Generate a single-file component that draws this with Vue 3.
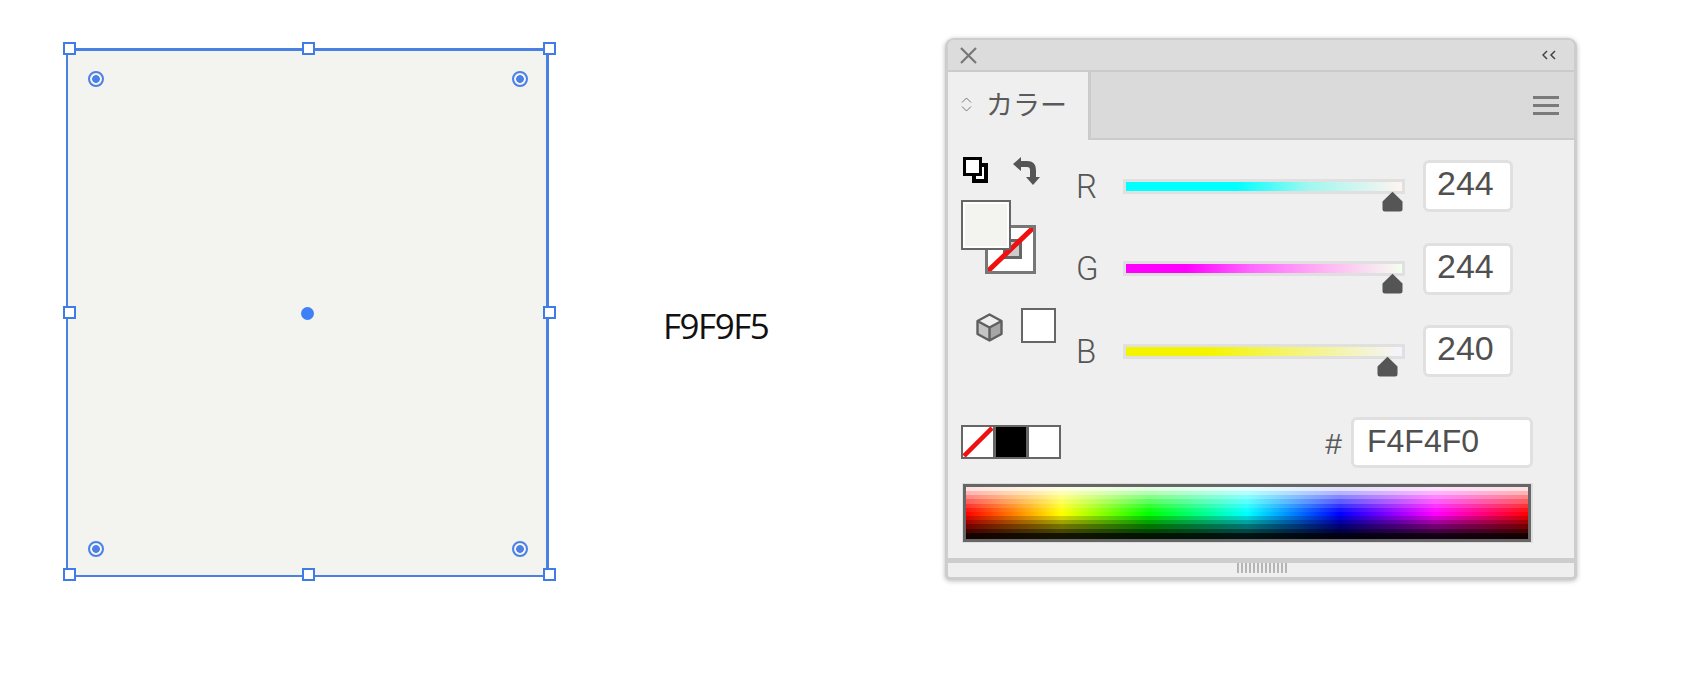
<script setup>
const sliders = [
  { label: 'R', value: 244, cls: 'grad-r' },
  { label: 'G', value: 244, cls: 'grad-g' },
  { label: 'B', value: 240, cls: 'grad-b' },
]
const thumbLeft = (v) => `${256 + (v - 244) * 1.25}px`
const handles = ['tl', 'tm', 'tr', 'ml', 'mr', 'bl', 'bm', 'br']
const corners = ['c-tl', 'c-tr', 'c-bl', 'c-br']
</script>

<template>
  <div class="page">
    <div class="selection">
      <span v-for="h in handles" :key="h" class="handle" :class="h"></span>
      <span v-for="c in corners" :key="c" class="corner" :class="c"></span>
      <span class="center-dot"></span>
    </div>

    <div class="note">F9F9F5</div>

    <div class="panel">
      <div class="titlebar">
        <svg class="close" width="17" height="17" viewBox="0 0 17 17">
          <path d="M1 1 L16 16 M16 1 L1 16" stroke="#777" stroke-width="2.2" fill="none" />
        </svg>
        <svg class="collapse" width="14" height="10" viewBox="0 0 14 10">
          <path d="M5 1 L1 5 L5 9 M13 1 L9 5 L13 9" stroke="#444" stroke-width="1.5" fill="none" />
        </svg>
      </div>

      <div class="tabbar">
        <div class="tab">
          <svg width="11" height="15" viewBox="0 0 11 15">
            <path d="M1 5.5 L5.5 1 L10 5.5 M1 9.5 L5.5 14 L10 9.5" stroke="#777" stroke-width="1" fill="none" />
          </svg>
          <span class="tab-label">カラー</span>
        </div>
        <div class="menu">
          <span></span><span></span><span></span>
        </div>
      </div>

      <div class="body">
        <div class="upper">
          <div class="tools">
            <div class="tool-icons">
              <svg width="25" height="26" viewBox="0 0 25 26">
                <rect x="11" y="8" width="12" height="16" fill="#fff" stroke="#000" stroke-width="4" />
                <rect x="1.5" y="1.5" width="16" height="16" fill="#fff" stroke="#000" stroke-width="3" />
              </svg>
              <svg width="27" height="28" viewBox="0 0 27 28">
                <path d="M0 7 L8 0 V4 H14 Q23 4 23 13 V20 H27 L20 28 L13 20 H17 V13 Q17 10 14 10 H8 V14 Z" fill="#555" />
              </svg>
            </div>

            <div class="swatches">
              <div class="stroke-swatch">
                <span class="stroke-inner"></span>
                <svg class="slash" width="45" height="43" viewBox="0 0 45 43">
                  <line x1="1" y1="42" x2="44" y2="1" stroke="#f01010" stroke-width="5" stroke-linecap="round" />
                </svg>
              </div>
              <div class="fill-swatch"></div>
            </div>

            <div class="gamut">
              <svg width="27" height="29" viewBox="0 0 27 29">
                <path d="M13.5 14.5 L13.5 27.5 L1.5 21 V8 Z" fill="#c4c4c4" />
                <path d="M13.5 14.5 L25.5 8 V21 L13.5 27.5 Z" fill="#a6a6a6" />
                <path d="M13.5 1.5 L25.5 8 L13.5 14.5 L1.5 8 Z" fill="#efefef" />
                <path d="M13.5 1.5 L25.5 8 V21 L13.5 27.5 L1.5 21 V8 Z M1.5 8 L13.5 14.5 L25.5 8 M13.5 14.5 V27.5" fill="none" stroke="#5f5f5f" stroke-width="2.4" stroke-linejoin="round" />
              </svg>
              <span class="websafe"></span>
            </div>
          </div>

          <div class="sliders">
            <div v-for="s in sliders" :key="s.label" class="slider-row">
              <span class="channel">{{ s.label }}</span>
              <div class="track" :class="s.cls">
                <svg class="thumb" :style="{ left: thumbLeft(s.value) }" width="21" height="21" viewBox="0 0 21 21">
                  <path d="M10.5 0.8 L20.5 10.5 V18 Q20.5 20.5 18 20.5 H3 Q0.5 20.5 0.5 18 V10.5 Z" fill="#555" />
                </svg>
              </div>
              <div class="num">{{ s.value }}</div>
            </div>
          </div>
        </div>

        <div class="hex-row">
          <div class="mini-swatches">
            <span class="mini none">
              <svg width="30" height="30" viewBox="0 0 30 30">
                <line x1="1" y1="29" x2="29" y2="1" stroke="#f01010" stroke-width="4.5" />
              </svg>
            </span>
            <span class="mini black"></span>
            <span class="mini white"></span>
          </div>
          <div class="hex">
            <span class="hash">#</span>
            <div class="hex-input">F4F4F0</div>
          </div>
        </div>

        <div class="spectrum-wrap">
          <div class="spectrum"></div>
        </div>
      </div>

      <div class="footer">
        <span class="grip"></span>
      </div>
    </div>
  </div>
</template>

<style>
html, body { margin: 0; background: #fff; }
</style>

<style scoped>
.page {
  width: 1690px;
  height: 700px;
  display: flex;
  align-items: flex-start;
  background: #fff;
  overflow: hidden;
  font-family: "Liberation Sans", Arial, sans-serif;
  color: #505050;
}

/* selection on the artboard */
.selection {
  position: relative;
  box-sizing: border-box;
  width: 483px;
  height: 529px;
  margin: 48px 0 0 66px;
  border: solid #4a7fe4;
  border-width: 3px 3px 2px 2px;
  background: #f3f3ef;
  flex: none;
}
.handle {
  position: absolute;
  box-sizing: border-box;
  width: 13px;
  height: 13px;
  background: #fff;
  border: 2px solid #3f7ce8;
}
.tl { left: -5px; top: -9px; }
.tm { left: 234px; top: -9px; }
.tr { left: 475px; top: -9px; }
.ml { left: -5px; top: 255px; }
.mr { left: 475px; top: 255px; }
.bl { left: -5px; top: 517px; }
.bm { left: 234px; top: 517px; }
.br { left: 475px; top: 517px; }
.corner {
  position: absolute;
  box-sizing: border-box;
  width: 16px;
  height: 16px;
  border: 2px solid #4a80e8;
  border-radius: 50%;
  background: radial-gradient(circle, #4a80e8 3.5px, transparent 4.2px);
}
.c-tl { left: 20px; top: 20px; }
.c-tr { left: 444px; top: 20px; }
.c-bl { left: 20px; top: 490px; }
.c-br { left: 444px; top: 490px; }
.center-dot {
  position: absolute;
  left: 233px;
  top: 256px;
  width: 13px;
  height: 13px;
  border-radius: 50%;
  background: #3f80f8;
}

.note {
  flex: none;
  width: 282px;
  margin: 304px 0 0 114px;
  font-family: "Open Sans", sans-serif;
  font-size: 35px;
  line-height: 44px;
  letter-spacing: -1.5px;
  color: #111;
}

/* colour panel */
.panel {
  flex: none;
  box-sizing: border-box;
  width: 632px;
  height: 542px;
  margin-top: 38px;
  border: 3px solid #cdcdcd;
  border-top-width: 2px;
  border-radius: 9px 9px 5px 5px;
  background: #efefef;
  box-shadow: 0 1px 5px rgba(0, 0, 0, 0.28);
  display: flex;
  flex-direction: column;
  overflow: hidden;
}
.titlebar {
  flex: none;
  height: 30px;
  box-sizing: content-box;
  background: #dcdcdc;
  border-bottom: 2px solid #cbcbcb;
  display: flex;
  align-items: center;
  justify-content: space-between;
  padding: 0 18px 0 12px;
}
.tabbar {
  flex: none;
  height: 68px;
  box-sizing: border-box;
  background: #dadada;
  border-bottom: 2px solid #cbcbcb;
  display: flex;
  justify-content: space-between;
}
.tab {
  width: 143px;
  height: 68px;
  box-sizing: border-box;
  background: #efefef;
  border-right: 3px solid #cbcbcb;
  display: flex;
  align-items: center;
  padding: 0 0 4px 13px;
  gap: 14px;
}
.tab-label {
  font-family: "Noto Sans CJK JP", sans-serif;
  font-size: 27px;
  line-height: 30px;
  color: #5a5a5a;
}
.menu {
  width: 26px;
  margin: 24px 15px 0 0;
  display: flex;
  flex-direction: column;
  gap: 5px;
}
.menu span {
  display: block;
  height: 3px;
  background: #7a7a7a;
}

.body {
  flex: 1;
  padding-top: 17px;
  box-sizing: border-box;
  min-height: 0;
}
.upper {
  display: flex;
  align-items: flex-start;
}
.tools {
  flex: none;
  width: 115px;
  padding-left: 13px;
}
.tool-icons {
  display: flex;
  align-items: flex-start;
  gap: 25px;
  padding-left: 2px;
  height: 29px;
}
.swatches {
  position: relative;
  width: 75px;
  height: 74px;
  margin-top: 14px;
}
.fill-swatch {
  position: absolute;
  left: 0;
  top: 0;
  box-sizing: border-box;
  width: 50px;
  height: 50px;
  background: #f3f3ef;
  border: 2px solid #666;
  box-shadow: inset 0 0 0 2px #fff;
}
.stroke-swatch {
  position: absolute;
  right: 0;
  bottom: 0;
  box-sizing: border-box;
  width: 51px;
  height: 49px;
  background: #fff;
  border: 3px solid #777;
}
.stroke-inner {
  position: absolute;
  left: 15px;
  top: 11px;
  box-sizing: border-box;
  width: 19px;
  height: 20px;
  background: #ccc;
  border: 3px solid #666;
}
.slash {
  position: absolute;
  left: 0;
  top: 0;
}
.gamut {
  display: flex;
  align-items: flex-start;
  gap: 18px;
  margin: 34px 0 0 15px;
}
.gamut svg { margin-top: 5px; }
.websafe {
  box-sizing: border-box;
  width: 35px;
  height: 35px;
  background: #fff;
  border: 2px solid #666;
}

.sliders {
  margin-top: 3px;
  display: flex;
  flex-direction: column;
  gap: 30.5px;
}
.slider-row {
  display: flex;
  align-items: center;
  height: 52px;
}
.channel {
  width: 47px;
  font-family: "Roboto", sans-serif;
  font-weight: 300;
  font-size: 33px;
  line-height: 36px;
  color: #555;
  padding-top: 1px;
}
.track {
  position: relative;
  box-sizing: border-box;
  width: 282px;
  height: 15px;
  border: 3px solid #e0e0e0;
}
.grad-r { background: linear-gradient(90deg, #00ffff 0%, #00ffff 40%, #9ff7f0 66%, #fff4f0 100%); }
.grad-g { background: linear-gradient(90deg, #ff00ff 0%, #ff00ff 22%, #ff66ff 45%, #ffb4f4 72%, #f4fff0 100%); }
.grad-b { background: linear-gradient(90deg, #f4f400 0%, #f4f400 30%, #f4f460 55%, #f4f4b0 78%, #f4f4ff 100%); }
.thumb {
  position: absolute;
  top: 9px;
}
.num {
  box-sizing: border-box;
  width: 90px;
  height: 52px;
  margin-left: 18px;
  background: #fff;
  border: 3px solid #e0e0e0;
  border-radius: 6px;
  font-size: 34px;
  line-height: 41px;
  padding-left: 11px;
  color: #505050;
}

.hex-row {
  display: flex;
  justify-content: space-between;
  align-items: flex-start;
  margin-top: 40px;
  padding: 0 41px 0 13px;
}
.mini-swatches {
  display: flex;
  margin-top: 8px;
}
.mini {
  box-sizing: border-box;
  width: 34px;
  height: 34px;
  border: 2px solid #666;
  margin-right: -1px;
  display: block;
}
.none { background: #fff; }
.none svg { display: block; }
.black { background: #000; }
.white { background: #fff; margin-right: 0; }
.hex {
  display: flex;
  align-items: center;
  gap: 9px;
}
.hash {
  font-size: 30px;
  line-height: 32px;
  color: #5a5a5a;
  padding-top: 2px;
}
.hex-input {
  box-sizing: border-box;
  width: 182px;
  height: 51px;
  background: #fff;
  border: 3px solid #e0e0e0;
  border-radius: 6px;
  font-size: 32px;
  line-height: 43px;
  padding-left: 13px;
  color: #505050;
}
.spectrum-wrap {
  margin: 15px 41px 0 14px;
  padding: 1px 2px 1px 1px;
  background: #dedede;
}
.spectrum {
  box-sizing: border-box;
  height: 58px;
  border: 3px solid #666;
  background:
    linear-gradient(180deg,
      rgba(255,255,255,0.88) 0 8%, rgba(255,255,255,0.7) 8% 16%, rgba(255,255,255,0.52) 16% 24%,
      rgba(255,255,255,0.36) 24% 32%, rgba(255,255,255,0.2) 32% 40%, rgba(255,255,255,0.07) 40% 48%,
      rgba(0,0,0,0) 48% 56%, rgba(0,0,0,0.18) 56% 64%, rgba(0,0,0,0.36) 64% 72%,
      rgba(0,0,0,0.55) 72% 80%, rgba(0,0,0,0.72) 80% 88%, rgba(0,0,0,0.92) 88% 100%),
    linear-gradient(90deg, #f00 0%, #ff0 17%, #0f0 32.5%, #0ff 50%, #00f 66.5%, #f0f 83.5%, #f00 100%);
}

.footer {
  flex: none;
  height: 19px;
  box-sizing: border-box;
  border-top: 5px solid #cdcdcd;
  display: flex;
  justify-content: center;
  align-items: flex-start;
}
.grip {
  width: 50px;
  height: 10px;
  margin-left: 2px;
  background: repeating-linear-gradient(90deg, #b5b5b5 0 2px, transparent 2px 4px);
}
</style>
